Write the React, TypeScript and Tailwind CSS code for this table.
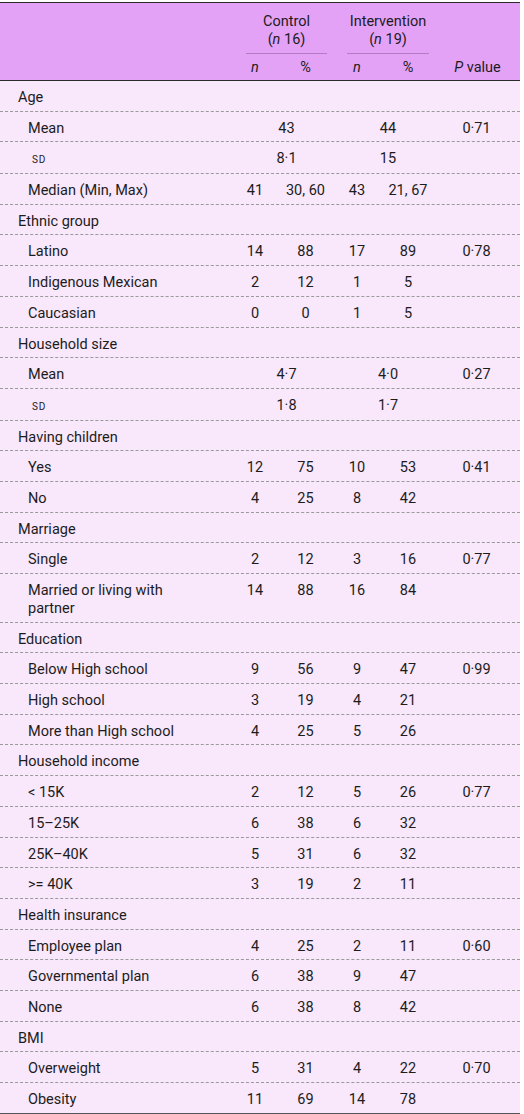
import React from 'react';

type Row =
  | { kind: 'section'; label: string }
  | { kind: 'data'; label: React.ReactNode; cn?: string; cp?: string; inn?: string; ip?: string; p?: string; twoLine?: boolean }
  | { kind: 'span'; label: React.ReactNode; c: string; i: string; p?: string };

const sd = <span className="text-[10px] tracking-[0.08em] pl-[4px]">SD</span>;

const rows: Row[] = [
  { kind: 'section', label: 'Age' },
  { kind: 'span', label: 'Mean', c: '43', i: '44', p: '0·71' },
  { kind: 'span', label: sd, c: '8·1', i: '15' },
  { kind: 'data', label: 'Median (Min, Max)', cn: '41', cp: '30, 60', inn: '43', ip: '21, 67' },
  { kind: 'section', label: 'Ethnic group' },
  { kind: 'data', label: 'Latino', cn: '14', cp: '88', inn: '17', ip: '89', p: '0·78' },
  { kind: 'data', label: 'Indigenous Mexican', cn: '2', cp: '12', inn: '1', ip: '5' },
  { kind: 'data', label: 'Caucasian', cn: '0', cp: '0', inn: '1', ip: '5' },
  { kind: 'section', label: 'Household size' },
  { kind: 'span', label: 'Mean', c: '4·7', i: '4·0', p: '0·27' },
  { kind: 'span', label: sd, c: '1·8', i: '1·7' },
  { kind: 'section', label: 'Having children' },
  { kind: 'data', label: 'Yes', cn: '12', cp: '75', inn: '10', ip: '53', p: '0·41' },
  { kind: 'data', label: 'No', cn: '4', cp: '25', inn: '8', ip: '42' },
  { kind: 'section', label: 'Marriage' },
  { kind: 'data', label: 'Single', cn: '2', cp: '12', inn: '3', ip: '16', p: '0·77' },
  { kind: 'data', label: 'Married or living with partner', cn: '14', cp: '88', inn: '16', ip: '84', twoLine: true },
  { kind: 'section', label: 'Education' },
  { kind: 'data', label: 'Below High school', cn: '9', cp: '56', inn: '9', ip: '47', p: '0·99' },
  { kind: 'data', label: 'High school', cn: '3', cp: '19', inn: '4', ip: '21' },
  { kind: 'data', label: 'More than High school', cn: '4', cp: '25', inn: '5', ip: '26' },
  { kind: 'section', label: 'Household income' },
  { kind: 'data', label: '< 15K', cn: '2', cp: '12', inn: '5', ip: '26', p: '0·77' },
  { kind: 'data', label: '15–25K', cn: '6', cp: '38', inn: '6', ip: '32' },
  { kind: 'data', label: '25K–40K', cn: '5', cp: '31', inn: '6', ip: '32' },
  { kind: 'data', label: '>= 40K', cn: '3', cp: '19', inn: '2', ip: '11' },
  { kind: 'section', label: 'Health insurance' },
  { kind: 'data', label: 'Employee plan', cn: '4', cp: '25', inn: '2', ip: '11', p: '0·60' },
  { kind: 'data', label: 'Governmental plan', cn: '6', cp: '38', inn: '9', ip: '47' },
  { kind: 'data', label: 'None', cn: '6', cp: '38', inn: '8', ip: '42' },
  { kind: 'section', label: 'BMI' },
  { kind: 'data', label: 'Overweight', cn: '5', cp: '31', inn: '4', ip: '22', p: '0·70' },
  { kind: 'data', label: 'Obesity', cn: '11', cp: '69', inn: '14', ip: '78' },
];

const grid = 'grid grid-cols-[236px_38px_63px_40px_62px_1fr]';
const cell = 'pt-[8px] pb-[3.7px] leading-[18px]';

export default function App() {
  return (
    <div className="w-[520px] pt-[2px] text-[14.5px] text-[#1c1c1c] font-['Roboto','Noto_Sans',sans-serif]">
      <div className="border-t-[1.5px] border-b border-[#2a2a2a] bg-[#e4a2f7]">
        <div className={grid}>
          <div />
          <div className="col-span-2 px-[10px] pt-[10px] text-center leading-[18px]">
            <div>Control</div>
            <div>(<i>n</i> 16)</div>
            <div className="mt-[4px] border-b border-[#b27cc2]" />
          </div>
          <div className="col-span-2 px-[10px] pt-[10px] text-center leading-[18px]">
            <div>Intervention</div>
            <div>(<i>n</i> 19)</div>
            <div className="mt-[4px] border-b border-[#b27cc2]" />
          </div>
          <div />
        </div>
        <div className={`${grid} h-[26px] items-center pt-[2px]`}>
          <div />
          <div className="text-center"><i>n</i></div>
          <div className="text-center">%</div>
          <div className="text-center"><i>n</i></div>
          <div className="text-center">%</div>
          <div className="text-center pr-[4px]"><i>P</i> value</div>
        </div>
      </div>
      <div className="bg-[#f9e7fb] border-b-2 border-[#555]">
        {rows.map((r, idx) => {
          const last = idx === rows.length - 1;
          const line = last ? '' : 'border-b border-dashed border-[#9a9a9a]';
          if (r.kind === 'section') {
            return (
              <div key={idx} className={`${grid} ${line}`}>
                <div className={`${cell} pl-[18px]`}>{r.label}</div>
              </div>
            );
          }
          if (r.kind === 'span') {
            return (
              <div key={idx} className={`${grid} ${line}`}>
                <div className={`${cell} pl-[28px]`}>{r.label}</div>
                <div className={`${cell} col-span-2 text-center`}>{r.c}</div>
                <div className={`${cell} col-span-2 text-center`}>{r.i}</div>
                <div className={`${cell} text-center pr-[6px]`}>{r.p}</div>
              </div>
            );
          }
          return (
            <div key={idx} className={`${grid} ${line}`}>
              <div className={`${cell} pl-[28px] ${r.twoLine ? 'pr-[50px]' : ''}`}>{r.label}</div>
              <div className={`${cell} text-center`}>{r.cn}</div>
              <div className={`${cell} text-center`}>{r.cp}</div>
              <div className={`${cell} text-center`}>{r.inn}</div>
              <div className={`${cell} text-center`}>{r.ip}</div>
              <div className={`${cell} text-center pr-[6px]`}>{r.p}</div>
            </div>
          );
        })}
      </div>
    </div>
  );
}
